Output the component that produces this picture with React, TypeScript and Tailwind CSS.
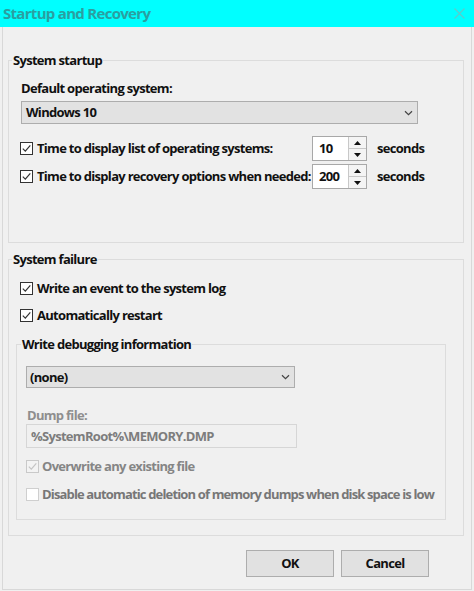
import React from "react";

const F = { fontFamily: '"Open Sans", "Noto Sans", Arial, sans-serif' };

function Check({ checked = true, disabled = false }: { checked?: boolean; disabled?: boolean }) {
  return (
    <span
      className={
        "inline-flex w-[13px] h-[13px] shrink-0 items-center justify-center border " +
        (disabled ? "border-[#c9c9c9] bg-[#f3f3f3]" : "border-[#333333] bg-white")
      }
    >
      {checked && (
        <svg width="11" height="11" viewBox="0 0 11 11">
          <path
            d="M1.8 5.6 L4.3 8.1 L9.3 2.4"
            fill="none"
            stroke={disabled ? "#c4c4c4" : "#333333"}
            strokeWidth="1.2"
          />
        </svg>
      )}
    </span>
  );
}

function Chevron() {
  return (
    <svg width="9" height="6" viewBox="0 0 9 6">
      <path d="M1 1.2 L4.5 4.6 L8 1.2" fill="none" stroke="#444" strokeWidth="1.2" />
    </svg>
  );
}

function Spin({ value }: { value: string }) {
  return (
    <div className="flex w-[55px] h-[25px] border border-[#a8a8a8] bg-white">
      <div className="flex-1 pl-[6px] flex items-center">{value}</div>
      <div className="w-[18px] flex flex-col border-l border-[#c8c8c8]">
        <div className="flex-1 flex items-center justify-center bg-[#f4f4f4] border-b border-[#c8c8c8]">
          <svg width="7" height="4" viewBox="0 0 7 4">
            <path d="M0 4 L3.5 0 L7 4 Z" fill="#111" />
          </svg>
        </div>
        <div className="flex-1 flex items-center justify-center bg-[#f4f4f4]">
          <svg width="7" height="4" viewBox="0 0 7 4">
            <path d="M0 0 L3.5 4 L7 0 Z" fill="#111" />
          </svg>
        </div>
      </div>
    </div>
  );
}

export default function App() {
  return (
    <div
      style={F}
      className="w-[474px] h-[591px] bg-[#f0f0f0] flex flex-col text-[13px] leading-[17px] font-bold text-[#111] tracking-[-0.7px] whitespace-nowrap overflow-hidden"
    >
      <div className="h-[27px] shrink-0 bg-[#00ffff] flex items-center justify-between pl-[3px] pr-[9px]">
        <span className="text-[15px] font-bold text-[#2a9fa1] tracking-[-0.7px]">Startup and Recovery</span>
        <svg width="11" height="11" viewBox="0 0 11 11">
          <path d="M0.5 0.5 L10.5 10.5 M10.5 0.5 L0.5 10.5" stroke="#5fcaca" strokeWidth="1.1" />
        </svg>
      </div>

      <div className="flex-1 flex flex-col border-x border-b border-[#d8d8d8] mx-[2px] mb-[1px] px-[5px]">
        {/* System startup */}
        <fieldset className="mt-[25px] w-[456px] border border-[#dcdcdc] pb-[53px]">
          <legend className="ml-[3px] px-[1px]">System startup</legend>
          <div className="pl-[12px]">
            <div className="mt-[11px]">Default operating system:</div>
            <div className="mt-[4px] w-[397px] h-[23px] flex items-center justify-between bg-[#e2e2e2] border border-[#adadad] pl-[4px] pr-[4px]">
              <span>Windows 10</span>
              <Chevron />
            </div>
            <div className="mt-[12px] flex items-center -ml-[1px]">
              <div className="w-[292px] flex items-center gap-[4px]">
                <Check />
                <span>Time to display list of operating systems:</span>
              </div>
              <Spin value="10" />
              <span className="ml-[10px]">seconds</span>
            </div>
            <div className="mt-[3px] flex items-center -ml-[1px]">
              <div className="w-[292px] flex items-center gap-[4px]">
                <Check />
                <span>Time to display recovery options when needed:</span>
              </div>
              <Spin value="200" />
              <span className="ml-[10px]">seconds</span>
            </div>
          </div>
        </fieldset>

        {/* System failure */}
        <fieldset className="mt-[8px] w-[456px] border border-[#dcdcdc] pb-[15px]">
          <legend className="ml-[3px] px-[1px]">System failure</legend>
          <div className="mt-[12px] ml-[11px] flex items-center gap-[4px]">
            <Check />
            <span>Write an event to the system log</span>
          </div>
          <div className="mt-[10px] ml-[11px] flex items-center gap-[4px]">
            <Check />
            <span>Automatically restart</span>
          </div>

          <fieldset className="mt-[12px] ml-[7px] w-[430px] border border-[#dcdcdc] pb-[16px]">
            <legend className="ml-[4px] px-[1px]">Write debugging information</legend>
            <div className="pl-[9px]">
              <div className="mt-[13px] w-[269px] h-[22px] flex items-center justify-between bg-[#e2e2e2] border border-[#adadad] pl-[3px] pr-[4px]">
                <span>(none)</span>
                <Chevron />
              </div>
              <div className="mt-[20px] ml-[1px] leading-[15px] text-[#8e8e8e]">Dump file:</div>
              <div className="mt-[1px] w-[271px] h-[24px] flex items-center border border-[#d6d6d6] bg-[#f0f0f0] pl-[4px] text-[#7d7d7d]">
                %SystemRoot%\MEMORY.DMP
              </div>
              <div className="mt-[10px] flex items-center gap-[3px] text-[#858585]">
                <Check disabled />
                <span>Overwrite any existing file</span>
              </div>
              <div className="mt-[11px] flex items-center gap-[3px] text-[#777777] tracking-[-0.85px]">
                <span className="inline-flex w-[13px] h-[13px] shrink-0 border border-[#cfcfcf] bg-white" />
                <span>Disable automatic deletion of memory dumps when disk space is low</span>
              </div>
            </div>
          </fieldset>
        </fieldset>

        <div className="mt-[14px] flex justify-end gap-[7px] pr-[37px]">
          <div className="w-[88px] h-[27px] flex items-center justify-center bg-[#e1e1e1] border border-[#adadad]">OK</div>
          <div className="w-[88px] h-[27px] flex items-center justify-center bg-[#e1e1e1] border border-[#adadad]">Cancel</div>
        </div>
      </div>
    </div>
  );
}
